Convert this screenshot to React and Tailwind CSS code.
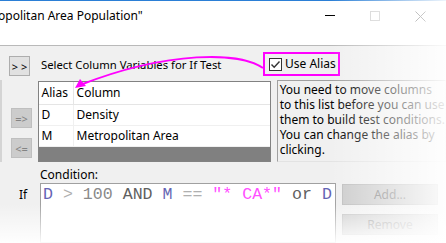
import React from 'react';

const ui = "font-['Noto_Sans','Open_Sans',sans-serif]";

function SmallButton({ label, disabled }) {
  return (
    <div
      className={`w-[21px] h-[20px] flex items-center justify-center text-[11px] leading-none border ${
        disabled
          ? 'bg-[#cccccc] border-[#bfbfbf] text-[#838383]'
          : 'bg-[#e1e1e1] border-[#adadad] text-black'
      }`}
    >
      {label}
    </div>
  );
}

function WideButton({ label }) {
  return (
    <div className="w-[96px] h-[21px] flex items-center justify-center border border-[#bfbfbf] bg-[#cccccc] text-[12px] text-[#838383]">
      {label}
    </div>
  );
}

export default function App() {
  const rows = [
    { alias: 'D', column: 'Density' },
    { alias: 'M', column: 'Metropolitan Area' },
  ];

  return (
    <div className={`relative w-[446px] h-[243px] overflow-hidden bg-white flex flex-col text-[12px] text-black ${ui}`}>
      {/* title bar */}
      <div className="h-px bg-[#2b7fd6]" />
      <div className="h-[49px] flex items-start">
        <div className="-ml-[2px] mt-[7px] text-[12px] leading-[16px] whitespace-nowrap">opolitan Area Population"</div>
        <div className="ml-auto flex items-start">
          <div className="mt-[14px] w-[10px] h-px bg-black" />
          <div className="ml-[35px] mt-[10px] w-[10px] h-[10px] border border-[#cccccc]" />
          <svg className="ml-[35px] mt-[10px]" width="11" height="11" viewBox="0 0 11 11">
            <path d="M0.5 0.5 L10.5 10.5 M10.5 0.5 L0.5 10.5" stroke="#333" strokeWidth="1" />
          </svg>
          <div className="w-[20px]" />
        </div>
      </div>
      <div className="h-px bg-[#b9b9b9]" />

      {/* dialog body */}
      <div className="flex-1 bg-[#f0f0f0] flex flex-col">
        <div className="h-[34px] flex items-start">
          <div className="mt-[10px] ml-[9px]">
            <SmallButton label="> >" />
          </div>
          <div className="mt-[11px] ml-[11px] w-[222px] text-[11.3px] leading-[16px] whitespace-nowrap">
            Select Column Variables for If Test
          </div>
          <div className="mt-[6px] w-[77px] h-[24px] border-2 border-[#ff00ff] flex items-center pl-[4px]">
            <div className="w-[13px] h-[13px] border border-[#333333] bg-white flex items-center justify-center">
              <svg width="11" height="11" viewBox="0 0 11 11">
                <path d="M1.5 5.5 L4.2 8.3 L9.5 2.5" fill="none" stroke="#333" strokeWidth="1.4" />
              </svg>
            </div>
            <span className="ml-[3px] leading-[16px] whitespace-nowrap">Use Alias</span>
          </div>
        </div>

        <div className="h-[82px] flex items-start">
          <div className="w-[38px] flex flex-col pl-[9px] pt-[28px] gap-[10px] self-stretch border-l-[2px] border-[#d4d4d4]">
            <SmallButton label="=>" disabled />
            <SmallButton label="<=" disabled />
          </div>
          <div className="w-[237px] h-[81px] mt-[1px] border border-[#828282] bg-[#808080] flex flex-col">
            <div className="h-[23px] flex bg-white border-b border-[#e5e5e5] shrink-0">
              <div className="w-[35px] pl-[3px] flex items-center border-r border-[#e5e5e5]">Alias</div>
              <div className="flex-1 pl-[3px] flex items-center">Column</div>
            </div>
            {rows.map(r => (
              <div key={r.alias} className="h-[21px] flex bg-white border-b border-[#f0f0f0] shrink-0">
                <div className="w-[35px] pl-[3px] flex items-center border-r border-[#f0f0f0]">{r.alias}</div>
                <div className="flex-1 pl-[3px] flex items-center">{r.column}</div>
              </div>
            ))}
          </div>
          <div className="ml-[6px] flex-1 h-[82px] border border-t-[#a0a0a0] border-l-[#a0a0a0] border-r-[#e3e3e3] border-b-[#e3e3e3] pl-[2px] pt-[1px] leading-[15px] whitespace-nowrap">
            <div>You need to move columns</div>
            <div>to this list before you can use</div>
            <div>them to build test conditions.</div>
            <div>You can change the alias by</div>
            <div>clicking.</div>
          </div>
        </div>

        <div className="pl-[40px] mt-[5px] h-[16px] leading-[16px]">Condition:</div>

        <div className="flex items-start">
          <div className="w-[40px] pl-[19px] mt-[4px] leading-[16px]">If</div>
          <div className="w-[296px] h-[60px] border border-[#a0a0a0] bg-white pl-[2px] pt-[1px] font-['Liberation_Mono',monospace] text-[16.6px] leading-[20px] whitespace-pre">
            <span className="text-[#6464b4]">D</span>
            <span className="text-[#b0b0b0]"> &gt; </span>
            <span className="text-[#8a8a8a]">100</span>
            <span className="text-[#606060]"> AND </span>
            <span className="text-[#6464b4]">M</span>
            <span className="text-[#b0b0b0]"> == </span>
            <span className="text-[#ff50ff]">"* CA*"</span>
            <span className="text-[#606060]"> or </span>
            <span className="text-[#6464b4]">D</span>
          </div>
          <div className="ml-[6px] mt-[1px] flex flex-col gap-[9px]">
            <WideButton label="Add..." />
            <WideButton label="Remove" />
          </div>
        </div>
      </div>

      {/* magenta annotation arrow */}
      <svg className="absolute left-0 top-0 pointer-events-none" width="446" height="243">
        <path d="M263 68 C240 52 170 50 80 85" fill="none" stroke="#ff00ff" strokeWidth="2" />
        <path d="M75 88 L80 79 L86 86 Z" fill="#ff00ff" />
      </svg>

      {/* fades at the edges */}
      <div className="absolute inset-0 pointer-events-none bg-[linear-gradient(to_right,rgba(255,255,255,0)_74%,rgba(255,255,255,0.92)_100%)]" />
      <div className="absolute inset-0 pointer-events-none bg-[linear-gradient(to_bottom,rgba(255,255,255,0)_84%,rgba(255,255,255,0.95)_100%)]" />
    </div>
  );
}
